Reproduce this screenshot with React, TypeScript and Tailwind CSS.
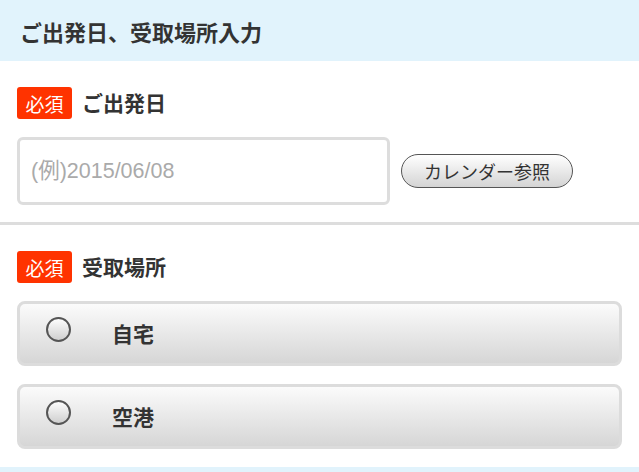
import React from 'react';

const font = { fontFamily: '"Noto Sans CJK JP", "Noto Sans", sans-serif' };
const latin = { fontFamily: '"Liberation Sans", "Noto Sans CJK JP", sans-serif' };

const Badge: React.FC = () => (
  <span className="flex items-center justify-center w-[55px] h-[32px] rounded-[3px] bg-[#ff3300] text-white text-[19px] leading-none">
    必須
  </span>
);

const FieldLabel: React.FC<{ label: string }> = ({ label }) => (
  <div className="flex items-center gap-[10px] h-[32px]">
    <Badge />
    <span className="text-[21px] font-bold text-[#333]">{label}</span>
  </div>
);

const RadioOption: React.FC<{ label: string }> = ({ label }) => (
  <label className="flex items-center h-[65px] rounded-[8px] border-[3px] border-[#dcdcdc] bg-gradient-to-b from-[#fbfbfb] to-[#d6d6d6] pl-[26px] cursor-pointer">
    <span className="w-[25px] h-[25px] mb-[9px] rounded-full border-2 border-[#555] bg-gradient-to-b from-[#fdfdfd] to-[#cfcfcf]" />
    <span className="ml-[41px] text-[21px] font-bold text-[#333]">{label}</span>
  </label>
);

export default function App() {
  return (
    <div className="w-[639px] h-[472px] overflow-hidden bg-white text-[#333]" style={font}>
      <div className="flex items-center h-[61px] px-[20px] bg-[#e1f3fc]">
        <h2 className="text-[22px] font-bold text-[#333] leading-none">ご出発日、受取場所入力</h2>
      </div>

      <div className="px-[17px] pt-[26px] pb-[17px]">
        <FieldLabel label="ご出発日" />
        <div className="flex items-center mt-[18px]">
          <div
            className="flex items-center w-[373px] h-[68px] rounded-[6px] border-[3px] border-[#dddddd] px-[11px] text-[21.5px] text-[#aaaaaa]"
            style={latin}
          >
            (例)2015/06/08
          </div>
          <button className="ml-[11px] w-[172px] h-[34px] rounded-full border-[1.5px] border-[#555] bg-gradient-to-b from-[#ffffff] to-[#d4d4d4] text-[18px] text-[#333] leading-none">
            カレンダー参照
          </button>
        </div>
      </div>

      <div className="h-[3px] bg-[#dddddd]" />

      <div className="px-[17px] pt-[26px] pb-[18px]">
        <FieldLabel label="受取場所" />
        <div className="flex flex-col gap-[18px] mt-[18px]">
          <RadioOption label="自宅" />
          <RadioOption label="空港" />
        </div>
      </div>

      <div className="h-[20px] bg-[#e1f3fc]" />
    </div>
  );
}
